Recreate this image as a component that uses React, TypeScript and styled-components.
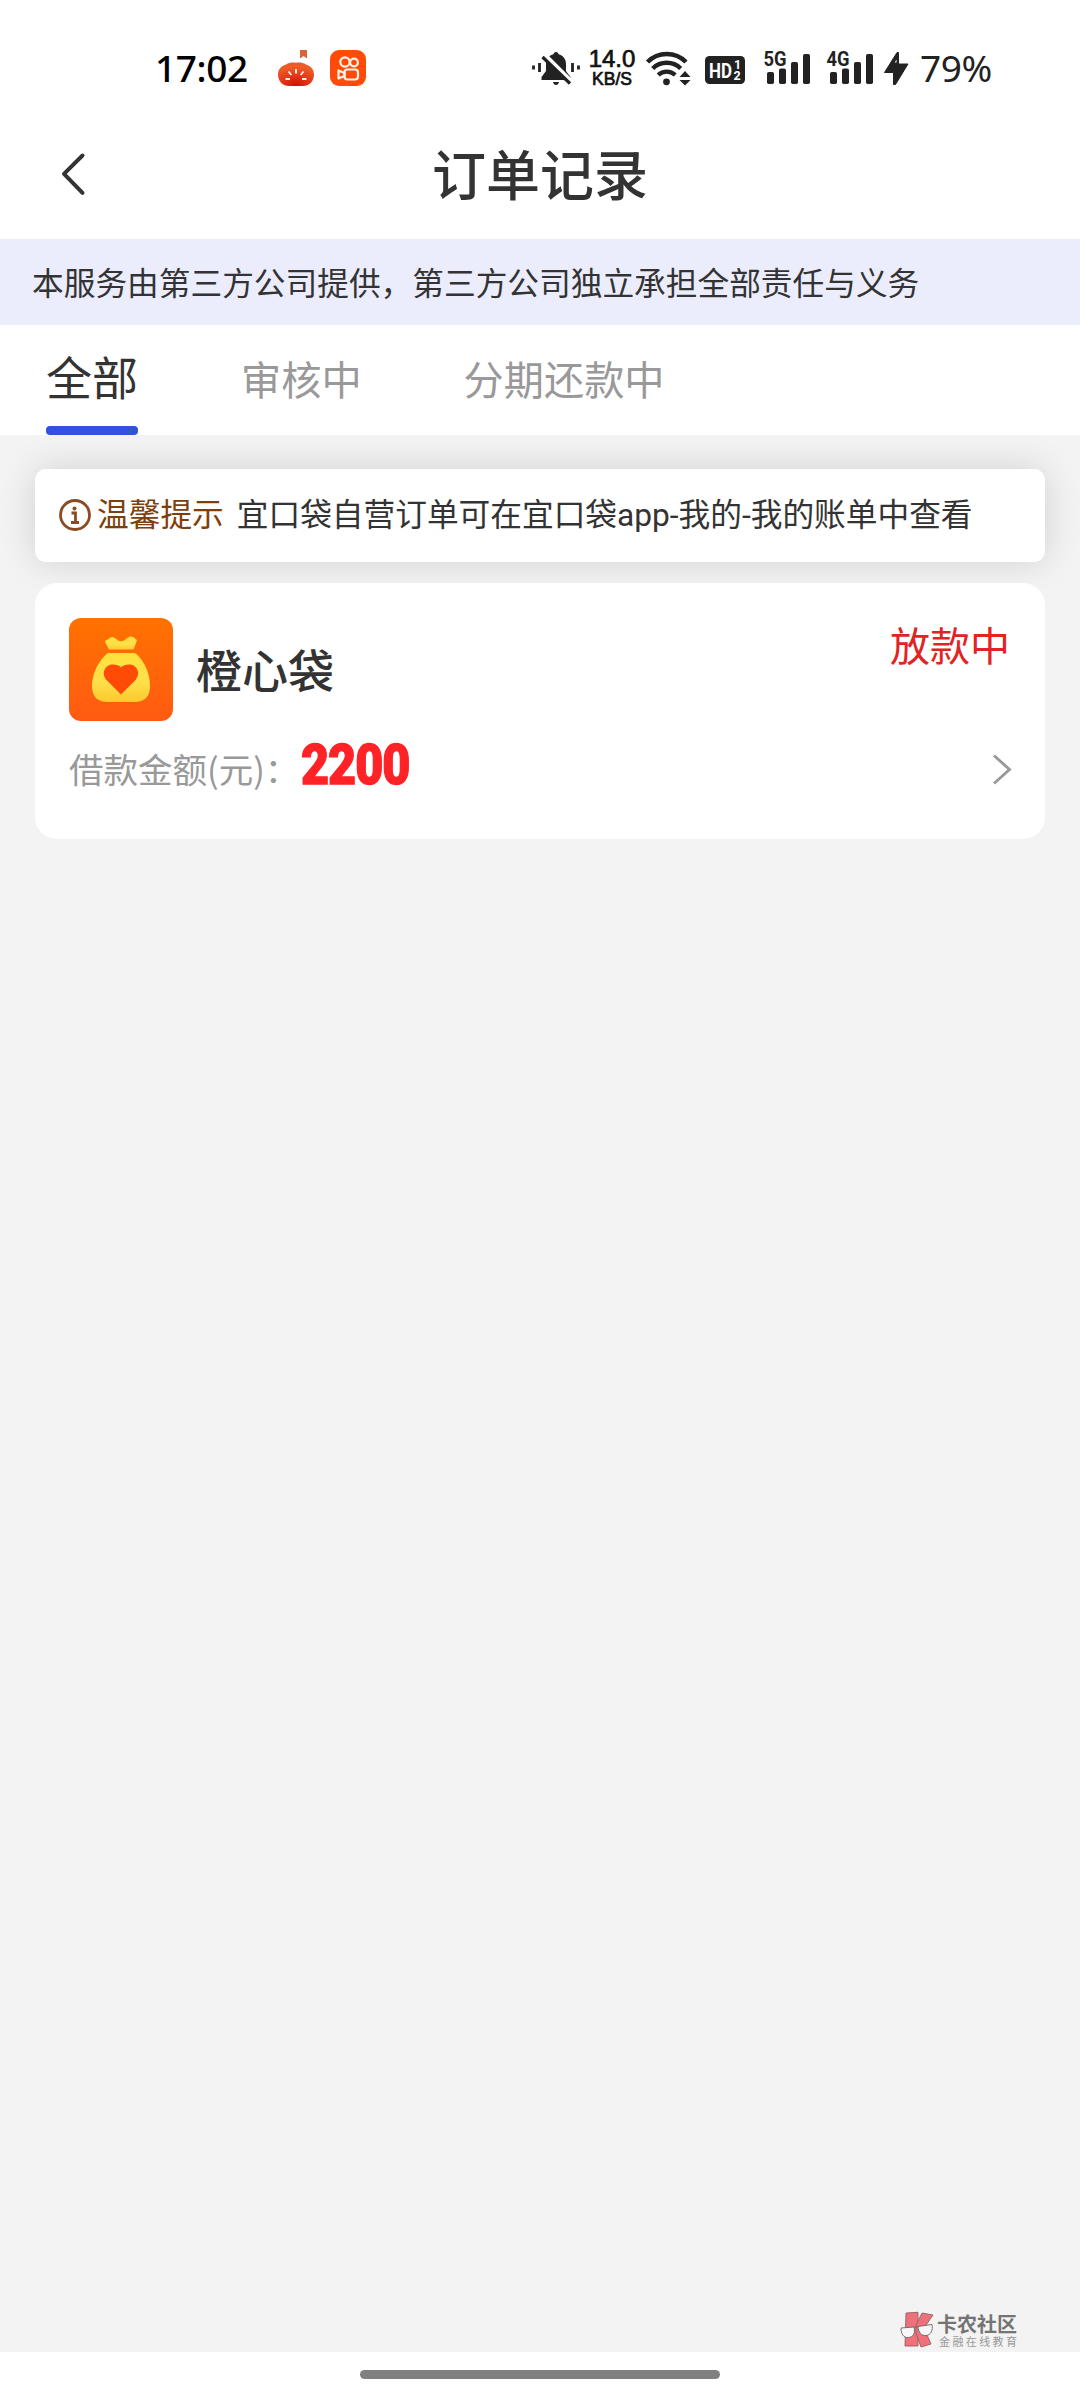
import React from "react";
import styled, { createGlobalStyle } from "styled-components";

const GlobalStyle = createGlobalStyle`
  * { box-sizing: border-box; }
  html, body { margin: 0; padding: 0; background: #fff; }
  body { font-family: "Noto Sans CJK SC", "Noto Sans", sans-serif; color: #333; }
`;

const Screen = styled.div`
  width: 1080px;
  height: 2400px;
  display: flex;
  flex-direction: column;
  background: #fff;
  overflow: hidden;
`;

const StatusBar = styled.div`
  height: 136px;
  padding: 0 86px 0 155px;
  display: flex;
  justify-content: space-between;
  align-items: center;
`;

const StatusGroup = styled.div`
  display: flex;
  align-items: center;
  height: 40px;
`;

const StatusText = styled.span<{ $width: number; $color: string; $gap?: number; $weight: number }>`
  width: ${(p) => p.$width}px;
  margin-left: ${(p) => p.$gap ?? 0}px;
  font: ${(p) => p.$weight} 37px/42px "Noto Sans", sans-serif;
  color: ${(p) => p.$color};
  letter-spacing: -0.4px;
  white-space: nowrap;
`;

const Icon = styled.svg<{ $gap?: number }>`
  display: block;
  flex: none;
  overflow: visible;
  margin-left: ${(p) => p.$gap ?? 0}px;
`;

const Speed = styled.div`
  width: 48px;
  height: 40px;
  margin-left: 8px;
  display: flex;
  flex-direction: column;
  align-items: center;
  justify-content: center;
  font-family: "Liberation Sans", Arial, sans-serif;
  color: #111;
  white-space: nowrap;
  -webkit-text-stroke: 0.7px #111;
`;

const SpeedValue = styled.span`
  font-size: 24px;
  line-height: 20px;
`;

const SpeedUnit = styled.span`
  padding-top: 1px;
  font-size: 17.5px;
  line-height: 18px;
`;

const Header = styled.header`
  height: 103px;
  padding: 0 60px;
  display: grid;
  grid-template-columns: 30px 1fr 30px;
  align-items: start;
`;

const BackIcon = styled(Icon)`
  margin-top: 17px;
`;

const Title = styled.h1`
  margin: 0;
  text-align: center;
  font-size: 54px;
  line-height: 74px;
  font-weight: 500;
  color: #333;
`;

const Notice = styled.div`
  height: 86px;
  padding-left: 32px;
  background: #ebedfd;
  font-size: 31.7px;
  line-height: 84px;
  color: #333;
  white-space: nowrap;
`;

const Tabs = styled.nav`
  height: 110px;
  padding-left: 46px;
  display: flex;
  align-items: stretch;
`;

const Tab = styled.div<{ $active?: boolean; $gap?: number }>`
  display: flex;
  flex-direction: column;
  justify-content: space-between;
  margin-left: ${(p) => p.$gap ?? 0}px;
  font-size: ${(p) => (p.$active ? 46 : 40.2)}px;
  line-height: ${(p) => (p.$active ? 101 : 106)}px;
  height: 110px;
  color: ${(p) => (p.$active ? "#333" : "#999")};
  white-space: nowrap;
`;

const TabLabel = styled.span`
  height: 101px;
`;

const TabLine = styled.span`
  height: 9px;
  border-radius: 4px;
  background: #3151de;
`;

const Content = styled.main`
  flex: 1;
  padding: 34px 35px 0;
  display: flex;
  flex-direction: column;
  background: #f3f3f3;
`;

const Tip = styled.section`
  height: 93px;
  padding-left: 24px;
  display: flex;
  align-items: center;
  background: #fff;
  border-radius: 11px;
  box-shadow: 0 0 36px rgba(0, 0, 0, 0.14);
  font-size: 31.7px;
  white-space: nowrap;
`;

const TipLabel = styled.span`
  height: 93px;
  margin-left: 6px;
  line-height: 87px;
  color: #7d400c;
`;

const TipText = styled.span`
  height: 93px;
  margin-left: 13px;
  line-height: 93px;
  font-family: Roboto, "Noto Sans CJK SC", sans-serif;
`;

const Card = styled.section`
  height: 256px;
  margin-top: 21px;
  padding: 35px 34px 0;
  background: #fff;
  border-radius: 22px;
`;

const CardTop = styled.div`
  display: flex;
  height: 104px;
`;

const ProductName = styled.h2`
  flex: 1;
  margin: 0 0 0 23px;
  font-size: 46px;
  line-height: 101px;
  font-weight: 500;
`;

const State = styled.span`
  margin-right: 1px;
  font-size: 40px;
  line-height: 52px;
  color: #e12323;
`;

const CardBottom = styled.div`
  display: flex;
  height: 60px;
  margin-top: 18px;
`;

const AmountLabel = styled.span`
  width: 232px;
  font-size: 34.5px;
  line-height: 56px;
  color: #999;
  white-space: nowrap;
`;

const Amount = styled.span`
  flex: 1;
  font: 900 56px/50px Roboto, sans-serif;
  letter-spacing: -1.1px;
  color: #ff2226;
  -webkit-text-stroke: 1.4px #ff2226;
  transform: scaleX(0.865);
  transform-origin: left;
`;

const Arrow = styled(Icon)`
  margin-top: 14px;
`;

const Brand = styled.div`
  margin-top: auto;
  align-self: flex-end;
  width: 145px;
  height: 40px;
  display: flex;
`;

const BrandWords = styled.div`
  margin-left: 3px;
  display: flex;
  flex-direction: column;
  white-space: nowrap;
`;

const BrandName = styled.span`
  font-size: 20px;
  line-height: 23px;
  font-weight: 700;
  color: #747474;
`;

const BrandSub = styled.span`
  margin-left: 2px;
  font-size: 11px;
  line-height: 12px;
  letter-spacing: 2.4px;
  color: #999;
`;

const HomeArea = styled.footer`
  height: 48px;
  padding-top: 18px;
  display: flex;
  justify-content: center;
`;

const HomeBar = styled.div`
  width: 360px;
  height: 9px;
  border-radius: 5px;
  background: #808080;
`;

const INK = "#222";

const Pumpkin = () => (
  <Icon $gap={29} width="36" height="36" viewBox="0 0 36 36">
    <defs>
      <radialGradient id="pumpkin" cx="0.5" cy="0.95" r="0.75">
        <stop offset="0" stopColor="#d4100a" />
        <stop offset="1" stopColor="#ee5a28" />
      </radialGradient>
    </defs>
    <path d="M22 0h7v8.500l-3.500-2.500-3.500 2.500z" fill="#d8623a" />
    <path d="M18 12.700c3-.5 7-.2 10 1.800 5 1.500 8 5 8 10 0 7-5 11.500-11 11.500H11C5 36 0 31.500 0 24.500c0-5 3-8.500 8-10 3-2 7-2.300 10-1.800z" fill="url(#pumpkin)" />
    <path d="M18 19v4.500M10.500 21.500l2.800 3.500M25.500 21.500l-2.800 3.500M7.500 29h4.500M24 29h4.500" stroke="#fff3dc" strokeWidth="1.900" />
  </Icon>
);

const VideoApp = () => (
  <Icon $gap={16} width="36" height="36" viewBox="0 0 36 36">
    <rect width="36" height="36" rx="9" fill="#ff4a0a" />
    <g fill="none" stroke="#fff4e8" strokeWidth="2.200">
      <circle cx="15" cy="12" r="4.700" />
      <circle cx="24" cy="12.500" r="3.900" />
      <rect x="14.500" y="19.500" width="13.500" height="10" rx="3" />
      <path d="M14.500 23l-6-2.600v8.200l6-2.600z" strokeLinejoin="round" />
    </g>
  </Icon>
);

const MutedBell = () => (
  <Icon width="48" height="36" viewBox="0 0 48 36">
    <path d="M24 2c1.500 0 2.300 1 2.500 2.200 4.500 1.200 7.500 4.800 7.500 9.800v7l4.500 6v3H9.500v-3l4.500-6v-7c0-5 3-8.600 7.500-9.800C21.700 3 22.500 2 24 2z" fill={INK} />
    <path d="M21 32h6c-.5 2-1.500 3-3 3s-2.500-1-3-3z" fill={INK} />
    <path d="M13 5l27 27" stroke="#fff" strokeWidth="4" />
    <path d="M10.500 7l27.500 26.500" stroke={INK} strokeWidth="3.200" />
    <path d="M7.500 13v9M40.500 13v9M1.500 15.500v4M46.500 15.500v4" stroke={INK} strokeWidth="2.800" />
  </Icon>
);

const Wifi = () => (
  <Icon $gap={10} width="46" height="36" viewBox="0 0 46 36">
    <g fill="none" stroke={INK} strokeWidth="4.400">
      <path d="M1.500 12a27 27 0 0 1 38.500 0" />
      <path d="M6.700 18.500a20 20 0 0 1 28 0" />
      <path d="M12.200 25a12.500 12.500 0 0 1 17 0" />
    </g>
    <circle cx="20.500" cy="31.800" r="3.400" fill={INK} />
    <path d="M39 21l5.500 6h-11zM39 35.500l5.500-5.500h-11z" fill={INK} />
  </Icon>
);

const HdBadge = () => (
  <Icon $gap={13} width="40" height="36" viewBox="0 0 40 36">
    <rect y="6" width="40" height="28" rx="4.500" fill={INK} />
    <g fill="#fff" fontFamily="Roboto, sans-serif" fontWeight="700">
      <text x="4" y="27.500" fontSize="20.500" textLength="23" lengthAdjust="spacingAndGlyphs">HD</text>
      <text x="29" y="18.500" fontSize="12.500">1</text>
      <text x="28.500" y="30" fontSize="12.500">2</text>
    </g>
  </Icon>
);

const Signal = ({ label }: { label: string }) => (
  <Icon $gap={label === "5G" ? 19 : 17} width="46" height="36" viewBox="0 0 46 36">
    <g fill={INK}>
      <rect x="3" y="22" width="7" height="12" rx="1.800" />
      <rect x="15" y="18.500" width="7" height="15.500" rx="1.800" />
      <rect x="27" y="12" width="7" height="22" rx="1.800" />
      <rect x="39" y="4" width="7" height="30" rx="1.800" />
      <text x="-0.500" y="16" fontFamily="Roboto, sans-serif" fontWeight="700" fontSize="19.500" textLength="23" lengthAdjust="spacingAndGlyphs">{label}</text>
    </g>
  </Icon>
);

const Bolt = () => (
  <Icon $gap={11} width="25" height="36" viewBox="0 0 25 36">
    <path d="M13 2.500h1.500v11.500H24L11.500 34.500H9.500V22.500H.5z" fill={INK} stroke={INK} strokeLinejoin="round" />
    <path d="M10.800 12.500l1.700-3v3z" fill="#fff" />
  </Icon>
);

const MoneyBag = () => (
  <Icon width="104" height="103" viewBox="0 0 104 103">
    <defs>
      <linearGradient id="tile" x1="0" y1="0" x2="0" y2="1">
        <stop offset="0" stopColor="#ff7200" />
        <stop offset="1" stopColor="#ff5a12" />
      </linearGradient>
      <linearGradient id="bag" x1="0" y1="0" x2="0" y2="1">
        <stop offset="0" stopColor="#ffe13c" />
        <stop offset="0.600" stopColor="#ffe04a" />
        <stop offset="1" stopColor="#fcc92c" />
      </linearGradient>
    </defs>
    <rect width="104" height="103" rx="12" fill="url(#tile)" />
    <path d="M40 31.500l-3.700-7c-.6-1.300.2-2.300 1.500-2.600 2-.3 3-2.900 5.300-2.900 3.400 0 4.400 4.200 9.100 4.200 4.600 0 5.200-4.200 9.700-4.700 2.500-.2 3.600 1.700 5.200 2.800.9.700.8 1.800.3 2.700L64.500 31.500z" fill="url(#bag)" />
    <path d="M39 35h27c8 6 15 19 15 33 0 11-6 16-15 16H38c-9 0-15-5-15-16 0-14 8-27 16-33z" fill="url(#bag)" />
    <path d="M52 76.500L37.500 62c-6-7-1-15.500 6-15.500 4 0 7 1.200 8.500 3 1.500-1.800 4.500-3 8.500-3 7 0 12 8.500 6 15.500z" fill="#ff4b05" />
  </Icon>
);

const BrandMark = () => (
  <Icon width="34" height="36" viewBox="0 0 34 36">
    <g fill="#f0717a" stroke="#8d6266" strokeWidth="0.900">
      <path d="M6 1l12-.7V34H5z" />
      <path d="M16 13L22 1l11 2-9 13 7 16-10 3-5-14z" />
    </g>
    <g fill="#f7f7f7" stroke="#666" strokeWidth="0.900">
      <path d="M1 16l13-1c1.500 6-.5 10-5.500 10.500S1 22 1 16z" />
      <path d="M18 14.500l14-2c1 6-1 10.500-6 11S18.500 20 18 14.500z" />
      <path d="M14 15.500l4-1" />
    </g>
  </Icon>
);

export default function App() {
  return (
    <Screen>
      <GlobalStyle />
      <StatusBar>
        <StatusGroup>
          <StatusText $width={94} $weight={500} $color="#000">17:02</StatusText>
          <Pumpkin />
          <VideoApp />
        </StatusGroup>
        <StatusGroup>
          <MutedBell />
          <Speed>
            <SpeedValue>14.0</SpeedValue>
            <SpeedUnit>KB/S</SpeedUnit>
          </Speed>
          <Wifi />
          <HdBadge />
          <Signal label="5G" />
          <Signal label="4G" />
          <Bolt />
          <StatusText $width={74} $gap={11} $weight={450} $color={INK}>79%</StatusText>
        </StatusGroup>
      </StatusBar>
      <Header>
        <BackIcon width="30" height="44" viewBox="0 0 30 44">
          <path d="M22.500 2.500L4 20.800l18.500 19" fill="none" stroke="#333" strokeWidth="4" strokeLinecap="round" strokeLinejoin="round" />
        </BackIcon>
        <Title>订单记录</Title>
      </Header>
      <Notice>本服务由第三方公司提供，第三方公司独立承担全部责任与义务</Notice>
      <Tabs>
        <Tab $active>
          <TabLabel>全部</TabLabel>
          <TabLine />
        </Tab>
        <Tab $gap={103}><TabLabel>审核中</TabLabel></Tab>
        <Tab $gap={102}><TabLabel>分期还款中</TabLabel></Tab>
      </Tabs>
      <Content>
        <Tip>
          <Icon width="32" height="32" viewBox="0 0 32 32">
            <circle cx="16" cy="15" r="14.500" fill="none" stroke="#8a4b22" strokeWidth="2.800" />
            <circle cx="15.500" cy="8.500" r="2" fill="#8a4b22" />
            <path d="M12.500 13h4v9M12 22.500h8" fill="none" stroke="#8a4b22" strokeWidth="2.800" />
          </Icon>
          <TipLabel>温馨提示</TipLabel>
          <TipText>宜口袋自营订单可在宜口袋app-我的-我的账单中查看</TipText>
        </Tip>
        <Card>
          <CardTop>
            <MoneyBag />
            <ProductName>橙心袋</ProductName>
            <State>放款中</State>
          </CardTop>
          <CardBottom>
            <AmountLabel>借款金额(元)：</AmountLabel>
            <Amount>2200</Amount>
            <Arrow width="20" height="32" viewBox="0 0 20 32">
              <path d="M3 1.500l15.500 14L3 29.500" fill="none" stroke="#999" strokeWidth="2.900" />
            </Arrow>
          </CardBottom>
        </Card>
        <Brand>
          <BrandMark />
          <BrandWords>
            <BrandName>卡农社区</BrandName>
            <BrandSub>金融在线教育</BrandSub>
          </BrandWords>
        </Brand>
      </Content>
      <HomeArea>
        <HomeBar />
      </HomeArea>
    </Screen>
  );
}
